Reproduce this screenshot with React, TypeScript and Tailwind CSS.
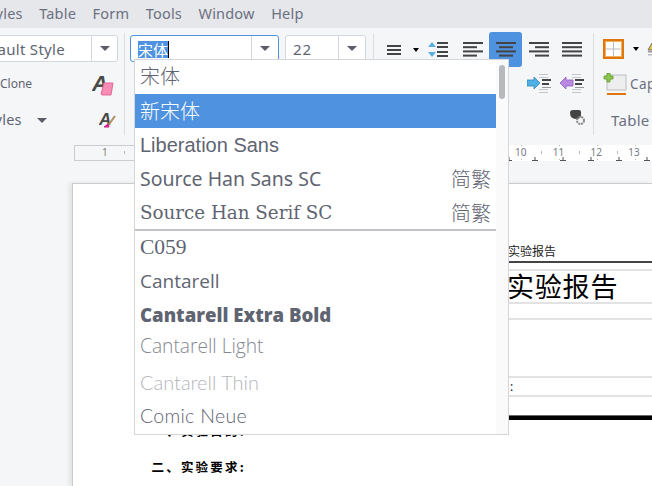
const UI = "font-['Noto_Sans','Noto_Sans_CJK_SC',sans-serif]";
const CJK = "font-['Noto_Sans_CJK_SC',sans-serif]";

const MENUS = ["Table", "Form", "Tools", "Window", "Help"];

// numbers 2-9 sit under the open font list
const RULER_NUMBERS = ["1", "", "", "", "", "", "", "", "", "", "", "10", "11", "12", "13"];

const FontRow = ({
  children,
  className = "",
  right,
  selected,
}: {
  children: React.ReactNode;
  className?: string;
  right?: string;
  selected?: boolean;
}) => (
  <div
    className={`flex shrink-0 items-center justify-between pl-[5px] pr-[5px] ${
      selected ? "bg-[#4f92e0] text-white" : "text-[#5f6472]"
    } ${className}`}
  >
    <span>{children}</span>
    {right && <span className={`${CJK} text-[20px] font-light`}>{right}</span>}
  </div>
);

const Combo = ({
  width,
  split,
  focus,
  children,
}: {
  width: string;
  split: string;
  focus?: boolean;
  children: React.ReactNode;
}) => (
  <div
    className={`flex h-[27px] shrink-0 rounded-[3px] border bg-white ${width} ${
      focus ? "border-[#4f92e0]" : "border-[#d3d7e2]"
    }`}
  >
    <div className="flex min-w-0 flex-1 items-center overflow-hidden pt-[2px]">{children}</div>
    <div className={`flex items-center justify-center border-l border-[#d3d7e2] ${split}`}>
      <Caret />
    </div>
  </div>
);

const Caret = ({ className = "border-x-[5px] border-t-[5px] border-t-[#5b5e68]" }: { className?: string }) => (
  <div className={`h-0 w-0 border-x-transparent ${className}`} />
);

const SmallCaret = () => <Caret className="border-x-[3.5px] border-t-[4px] border-t-black" />;

const Bars = ({ rows }: { rows: [number, number][] }) => (
  <svg width="20" height="15" viewBox="0 0 20 15" className="shrink-0">
    {rows.map(([x, w], i) => (
      <rect key={i} x={x} y={i * 4.2} width={w} height="2" fill="#444" />
    ))}
  </svg>
);

const IndentIcon = ({ fill, stroke, flip }: { fill: string; stroke: string; flip?: boolean }) => (
  <svg width="24" height="19" viewBox="0 0 24 19" className="shrink-0">
    {[0, 3, 15, 18].map((y) => (
      <rect key={y} x="12" y={y} width="9" height="1" fill="#c4c6cc" />
    ))}
    <rect x="15" y="5" width="9" height="2" fill="#444" />
    <rect x="15" y="9" width="7" height="2" fill="#444" />
    <rect x="15" y="13" width="9" height="1" fill="#999" />
    <path
      d={flip ? "M0 9 L6 3 V6 H13 V12 H6 V15 Z" : "M13 9 L7 3 V6 H0 V12 H7 V15 Z"}
      fill={fill}
      stroke={stroke}
      strokeWidth="0.8"
    />
  </svg>
);

export default function App() {
  return (
    <div className={`relative flex h-[486px] w-[652px] flex-col overflow-hidden bg-[#f5f6f8] ${UI}`}>
      {/* menu bar */}
      <div className="flex h-[28px] shrink-0 items-center gap-[16.5px] bg-[#e6e7eb] pb-[1px] text-[14.5px] tracking-[0.2px] text-[#6b7080]">
        <span className="-ml-[18px]">Styles</span>
        {MENUS.map((m) => (
          <span key={m}>{m}</span>
        ))}
      </div>

      {/* toolbar */}
      <div className="flex h-[117px] shrink-0 items-start overflow-hidden pt-[5px]">
        <div className="flex h-[102px] w-[124px] shrink-0 flex-col">
          <div className="-ml-[40px] mt-[2px]">
            <Combo width="w-[158px]" split="w-[26px]">
              <span className="pl-[11px] text-[15px] tracking-[0.3px] text-[#5f6472]">Default Style</span>
            </Combo>
          </div>
          <div className="mt-[10px] flex h-[24px] items-center justify-between pr-[8px]">
            <span className="text-[12px] text-[#5f6472]">Clone</span>
            <svg width="24" height="22" viewBox="0 0 24 22" className="mt-[2px]">
              <text x="0" y="17" fontFamily="Liberation Sans" fontStyle="italic" fontWeight="700" fontSize="22" fill="#4a4a4a">
                A
              </text>
              <path d="M9 20 L12 9 H21 L19 21 H10 Z" fill="#f78db4" stroke="#e2699a" strokeWidth="1" />
            </svg>
          </div>
          <div className="mt-[13px] flex h-[22px] items-center justify-between pr-[7px]">
            <div className="flex items-center gap-[15px]">
              <span className="-ml-[19px] text-[14.5px] tracking-[0.2px] text-[#5f6472]">Styles</span>
              <Caret className="border-x-[5.5px] border-t-[5px] border-t-[#5b5e68]" />
            </div>
            <svg width="18" height="18" viewBox="0 0 18 18">
              <text x="0" y="14" fontFamily="Liberation Sans" fontStyle="italic" fontWeight="700" fontSize="17" fill="#4a4a4a">
                A
              </text>
              <path d="M8 16 L16 5" stroke="#b08a5a" strokeWidth="2" />
              <path d="M5 16 L9 13 L10 16 Z" fill="#d6218f" stroke="#d6218f" />
            </svg>
          </div>
        </div>
        <div className="h-[102px] w-px shrink-0 bg-[#dcdde2]" />
        <div className="flex w-[248px] shrink-0 gap-[6px] pl-[5px] pt-[2px]">
          <Combo width="w-[149px]" split="w-[27px]" focus>
            <span className={`ml-[7px] bg-[#4f92e0] text-[15px] leading-[17px] text-white ${CJK}`}>宋体</span>
            <span className="h-[17px] w-px bg-black" />
          </Combo>
          <Combo width="w-[81px]" split="w-[27px]">
            <span className="pl-[7px] text-[15px] tracking-[1px] text-[#5f6472]">22</span>
          </Combo>
        </div>
        <div className="h-[102px] w-px shrink-0 bg-[#dcdde2]" />
        <div className="flex h-[102px] w-[219px] shrink-0 flex-col">
          <div className="-mt-px flex h-[35px] items-center">
            <div className="ml-[13px] flex w-[14px] flex-col gap-[2px]">
              <div className="h-[2px] bg-[#444]" />
              <div className="h-[2px] bg-[#444]" />
              <div className="h-[2px] bg-[#444]" />
            </div>
            <div className="ml-[12px]">
              <SmallCaret />
            </div>
            <svg width="20" height="16" viewBox="0 0 20 16" className="ml-[9px]">
              <path d="M0 5 L4 0 L8 5 Z M0 10 L4 15 L8 10 Z" fill="#5aaee0" />
              <rect x="9" y="0" width="11" height="2" fill="#444" />
              <rect x="9" y="4" width="11" height="2" fill="#444" />
              <rect x="9" y="9" width="11" height="2" fill="#444" />
              <rect x="9" y="13" width="11" height="2" fill="#444" />
            </svg>
            <div className="ml-[15px]">
              <Bars rows={[[0, 20], [0, 14], [0, 20], [0, 14]]} />
            </div>
            <div className="ml-[6px] flex h-[35px] w-[33px] items-center justify-center rounded-[3px] bg-[#4f92e0]">
              <Bars rows={[[0, 20], [3, 14], [0, 20], [3, 14]]} />
            </div>
            <div className="ml-[7px]">
              <Bars rows={[[0, 20], [6, 14], [0, 20], [6, 14]]} />
            </div>
            <div className="ml-[13px]">
              <Bars rows={[[0, 20], [0, 20], [0, 20], [0, 20]]} />
            </div>
          </div>
          <div className="mt-[7px] flex justify-end gap-[9px] pr-[9px]">
            <IndentIcon fill="#4fb0e6" stroke="#2c86c0" />
            <IndentIcon fill="#b98ae0" stroke="#8d5cc0" flip />
          </div>
          <div className="mt-[17px] flex justify-end pr-[8px]">
            <svg width="15" height="15" viewBox="0 0 15 15">
              <path d="M0 3 Q0 0 3 0 H9 Q11 0 11 2 V5 Q11 8 7 9 Q0 9 0 3 Z" fill="#444" />
              <circle cx="10.5" cy="10.5" r="3.5" fill="none" stroke="#8a8a8a" strokeWidth="2" strokeDasharray="2 0.8" />
            </svg>
          </div>
        </div>
        <div className="h-[102px] w-px shrink-0 bg-[#dcdde2]" />
        <div className="flex h-[102px] shrink-0 flex-col pl-[9px]">
          <div className="mt-[6px] flex h-[20px] items-center">
            <svg width="21" height="20" viewBox="0 0 21 20">
              <rect x="1" y="1" width="19" height="18" fill="#fff" stroke="#e0760e" strokeWidth="2" />
              <rect x="2.5" y="2.5" width="16" height="15" fill="none" stroke="#f0b060" strokeWidth="1" />
              <path d="M10.5 3 V17 M3 10 H18" stroke="#b9bcc2" strokeWidth="1" />
            </svg>
            <div className="ml-[9px]">
              <SmallCaret />
            </div>
            <svg width="10" height="14" viewBox="0 0 10 14" className="ml-[8px] shrink-0">
              <path d="M1 8 L5 1 L9 8 Z" fill="#e4c44a" stroke="#555" strokeWidth="0.8" />
              <rect x="1" y="9" width="8" height="1.5" fill="#999" />
              <rect x="1" y="12" width="8" height="1.5" fill="#bbb" />
            </svg>
          </div>
          <div className="mt-[13px] flex h-[24px] items-center">
            <svg width="24" height="23" viewBox="0 0 24 23" className="shrink-0">
              <rect x="4" y="2" width="19" height="15" fill="#eee" stroke="#b9bcc2" />
              <rect x="4" y="20" width="19" height="2" fill="#e0760e" />
              <path d="M4 0 H7 V3 H10 V6 H7 V9 H4 V6 H1 V3 H4 Z" fill="#8cc94f" stroke="#5d9a2a" strokeWidth="0.8" />
            </svg>
            <span className="ml-[3px] text-[13.5px] tracking-[0.4px] text-[#6b7080]">Caption</span>
          </div>
          <div className="mt-[13px] pl-[8px] text-[15px] tracking-[0.3px] text-[#6b7080]">Table</div>
        </div>
      </div>

      {/* ruler */}
      <div className="relative ml-[74px] flex h-[16px] shrink-0 border border-r-0 border-[#c9cbd0] bg-[#f5f6f8] pl-[11px]">
        <div className="absolute bottom-[-1px] left-[69px] right-0 top-[-1px] bg-white" />
        {RULER_NUMBERS.map((n, i) => (
          <span key={i} className="relative w-[37.8px] shrink-0 text-center text-[10px] leading-[12px] text-[#777a82]">
            {n}
          </span>
        ))}
        <svg width="578" height="16" className="absolute -top-px left-[-1px]">
          {[31, 50, 467, 505, 543, 581].map((x) => (
            <rect key={x} x={x} y="6" width="1" height="3" fill="#b5b7bc" />
          ))}
          {[447, 485, 523, 561].map((x) => (
            <g key={x} fill="#b5b7bc">
              <rect x={x} y="0" width="1" height="1" />
              <rect x={x} y="14" width="1" height="1" />
            </g>
          ))}
          {[435, 461, 489, 517, 545, 573].map((x) => (
            <path key={x} d={`M${x - 3} 15.5 H${x + 3} M${x} 12 V15.5`} stroke="#555" strokeWidth="1" />
          ))}
        </svg>
      </div>

      {/* document */}
      <div className="ml-[72px] mt-[22px] flex h-[303px] shrink-0 flex-col border-l border-t border-[#c9cbd0] bg-white pl-[62px] shadow-[-3px_0_4px_rgba(0,0,0,0.08)]">
        <div className="mt-[59px] h-[20px] border-b-2 border-[#444] pl-[373px] text-[12px] leading-[16px] text-[#222]">
          <span className={CJK}>实验报告</span>
        </div>
        <div className="mt-[6px] flex h-[35px] items-center border-y-2 border-[#e2e2e2] pl-[372px] text-[27px] tracking-[0.8px] text-black">
          <span className={CJK}>实验报告</span>
        </div>
        <div className="mt-[14px] h-[2px] bg-[#e2e2e2]" />
        <div className="mt-[56px] flex h-[21px] items-center border-y-2 border-[#e2e2e2] pl-[375px] text-[12px] text-[#222]">:</div>
        <div className="mt-[18px] h-[5px] border-t border-[#666] bg-black" />
        <div className={`ml-[16.5px] mt-px text-[12.5px] font-bold leading-[20px] tracking-[2.2px] text-black ${CJK}`}>
          一、实验目的:
        </div>
        <div className={`ml-[16.5px] mt-[16px] text-[12.5px] font-bold leading-[20px] tracking-[2.2px] text-black ${CJK}`}>
          二、实验要求:
        </div>
      </div>

      {/* font dropdown */}
      <div className="absolute left-[134px] top-[59px] flex h-[376px] w-[375px] flex-col border border-[#d5d6dc] bg-[#fafafb]">
        <div className="absolute right-[3px] top-[5px] h-[34px] w-[6px] rounded-[3px] bg-[#b8b9bf]" />
        <div className="mr-[12px] flex h-full flex-col bg-white text-[20px]">
          <FontRow className={`h-[34px] pb-[2px] font-light ${CJK}`}>宋体</FontRow>
          <FontRow selected className={`h-[34px] font-light ${CJK}`}>
            新宋体
          </FontRow>
          <FontRow className="h-[34px] font-['Liberation_Sans',sans-serif]">Liberation Sans</FontRow>
          <FontRow className="h-[34px] text-[19.5px]" right="简繁">
            Source Han Sans SC
          </FontRow>
          <FontRow className="h-[33px] pt-[1px] font-['DejaVu_Serif',serif] text-[18.3px] font-light" right="简繁">
            Source Han Serif SC
          </FontRow>
          <div className="h-[2px] shrink-0 bg-[#c2c3c8]" />
          <FontRow className="h-[33px] font-['Liberation_Serif',serif] text-[21.5px]">C059</FontRow>
          <FontRow className="h-[34px] font-['Open_Sans',sans-serif] text-[19px]">Cantarell</FontRow>
          <FontRow className="h-[34px] font-['Open_Sans',sans-serif] text-[18.6px] font-extrabold">Cantarell Extra Bold</FontRow>
          <FontRow className="h-[29px] font-['Open_Sans',sans-serif] text-[19.2px] font-light text-[#85888f]!">Cantarell Light</FontRow>
          <FontRow className="mt-[4px] h-[34px] font-['Lato',sans-serif] text-[20px] font-light text-[#b4b6bb]!">Cantarell Thin</FontRow>
          <FontRow className="h-[33px] font-['Lato',sans-serif] text-[19.5px] font-light tracking-[0.3px]">Comic Neue</FontRow>
        </div>
      </div>
    </div>
  );
}
